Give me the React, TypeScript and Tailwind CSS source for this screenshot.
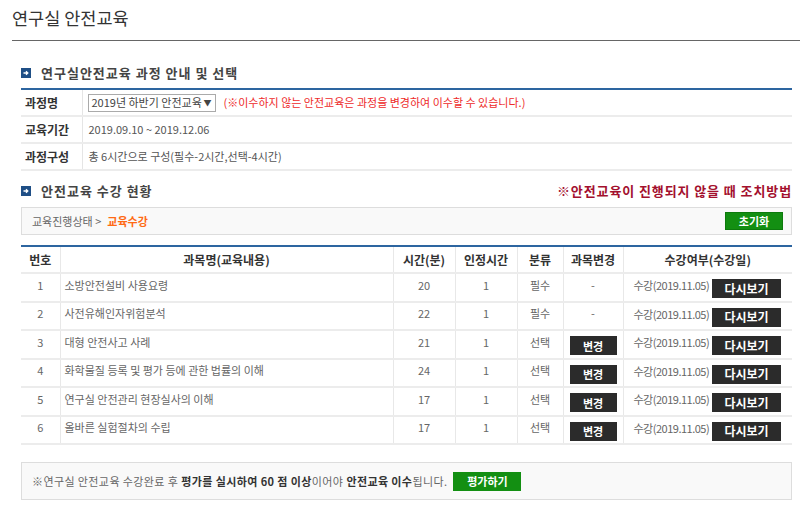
import React from "react";

const font = { fontFamily: '"Noto Sans CJK KR", "Noto Sans", sans-serif' };

function SecIcon() {
  return (
    <svg width="10" height="10" viewBox="0 0 10 10" className="shrink-0">
      <rect x="0" y="0" width="10" height="10" fill="#1f4f86" />
      <path d="M2.5 5 H6.5 M5 3.3 L6.8 5 L5 6.7" stroke="#fff" strokeWidth="1.3" fill="none" />
    </svg>
  );
}

const rows = [
  { n: 1, name: "소방안전설비 사용요령", t: 20, k: "필수" },
  { n: 2, name: "사전유해인자위험분석", t: 22, k: "필수" },
  { n: 3, name: "대형 안전사고 사례", t: 21, k: "선택" },
  { n: 4, name: "화학물질 등록 및 평가 등에 관한 법률의 이해", t: 24, k: "선택" },
  { n: 5, name: "연구실 안전관리 현장실사의 이해", t: 17, k: "선택" },
  { n: 6, name: "올바른 실험절차의 수립", t: 17, k: "선택" },
];

export default function App() {
  return (
    <div className="w-[800px] h-[506px] bg-white text-[#555] overflow-hidden pl-[12px]" style={font}>
      <div className="h-[41px] border-b border-[#666] flex items-center">
        <h1 className="text-[17.5px] text-[#333] font-normal leading-none -mt-[4px]">연구실 안전교육</h1>
      </div>

      <div className="pl-[9px] pr-[8px]">
        {/* section 1 */}
        <div className="h-[47px] flex items-center gap-[10px] pt-[16px]">
          <SecIcon />
          <span className="text-[13px] font-bold text-[#444] tracking-[1px]">연구실안전교육 과정 안내 및 선택</span>
        </div>
        <table className="w-full table-fixed border-collapse border-t-2 border-[#2d65a0] text-[11px]">
          <colgroup>
            <col className="w-[61px]" />
            <col />
          </colgroup>
          <tbody>
            <tr className="h-[27px] border-b-2 border-[#ececec]">
              <td className="font-bold text-[12px] text-[#333] pl-[4px] border-r border-[#e5e5e5]">과정명</td>
              <td className="pl-[5px]">
                <div className="flex items-center gap-[8px]">
                  <div className="h-[18px] w-[128px] border border-[#aaa] flex items-center justify-between px-[3px] text-[#444]">
                    <span>2019년 하반기 안전교육</span>
                    <span className="text-[8px]">▼</span>
                  </div>
                  <span className="text-[#ee2a2a]">(※이수하지 않는 안전교육은 과정을 변경하여 이수할 수 있습니다.)</span>
                </div>
              </td>
            </tr>
            <tr className="h-[27px] border-b-2 border-[#ececec]">
              <td className="font-bold text-[12px] text-[#333] pl-[4px] border-r border-[#e5e5e5]">교육기간</td>
              <td className="pl-[6px]">2019.09.10 ~ 2019.12.06</td>
            </tr>
            <tr className="h-[27px] border-b-2 border-[#ececec]">
              <td className="font-bold text-[12px] text-[#333] pl-[4px] border-r border-[#e5e5e5]">과정구성</td>
              <td className="pl-[6px]">총 6시간으로 구성(필수-2시간,선택-4시간)</td>
            </tr>
          </tbody>
        </table>

        {/* section 2 */}
        <div className="h-[36px] flex items-center justify-between pt-[4px]">
          <div className="flex items-center gap-[10px]">
            <SecIcon />
            <span className="text-[13px] font-bold text-[#444] tracking-[1px]">안전교육 수강 현황</span>
          </div>
          <span className="text-[13px] font-bold text-[#a3102e] tracking-[0.9px]">※안전교육이 진행되지 않을 때 조치방법</span>
        </div>
        <div className="h-[28px] border border-[#ddd] bg-[#f9f9f9] flex items-center justify-between pl-[10px] pr-[8px]">
          <div className="text-[11px] flex items-center gap-[6px]">
            <span className="text-[#666]">교육진행상태 &gt;</span>
            <span className="text-[#ff6a13] font-bold">교육수강</span>
          </div>
          <button className="h-[18px] w-[58px] bg-[#138f12] text-white text-[11px] font-bold border border-[#0d7a0d]">초기화</button>
        </div>

        <table className="mt-[10px] w-full table-fixed border-collapse border-t-2 border-[#2d65a0] text-[11px]">
          <colgroup>
            <col className="w-[39px]" />
            <col className="w-[333px]" />
            <col className="w-[62px]" />
            <col className="w-[62px]" />
            <col className="w-[46px]" />
            <col className="w-[60px]" />
            <col />
          </colgroup>
          <thead>
            <tr className="h-[27px] border-b-2 border-[#ececec] text-[12px] font-bold text-[#333]">
              <th className="border-r border-[#e8e8e8] font-bold">번호</th>
              <th className="border-r border-[#e8e8e8] font-bold">과목명(교육내용)</th>
              <th className="border-r border-[#e8e8e8] font-bold">시간(분)</th>
              <th className="border-r border-[#e8e8e8] font-bold">인정시간</th>
              <th className="border-r border-[#e8e8e8] font-bold">분류</th>
              <th className="border-r border-[#e8e8e8] font-bold">과목변경</th>
              <th className="font-bold">수강여부(수강일)</th>
            </tr>
          </thead>
          <tbody>
            {rows.map((r) => (
              <tr key={r.n} className="h-[28.5px] border-b-2 border-[#ececec] text-[#666]">
                <td className="text-center border-r border-[#e8e8e8] pb-[5px]">{r.n}</td>
                <td className="pl-[4px] border-r border-[#e8e8e8] pb-[5px]">{r.name}</td>
                <td className="text-center border-r border-[#e8e8e8] pb-[5px]">{r.t}</td>
                <td className="text-center border-r border-[#e8e8e8] pb-[5px]">1</td>
                <td className="text-center border-r border-[#e8e8e8] pb-[5px]">{r.k}</td>
                <td className="border-r border-[#e8e8e8]">
                  <div className="flex justify-center">
                    {r.k === "선택" ? (
                      <button className="h-[19px] w-[47px] mt-[3px] bg-[#2b2b2b] text-white text-[11px] font-bold">변경</button>
                    ) : (
                      <span className="mb-[5px]">-</span>
                    )}
                  </div>
                </td>
                <td className="pl-[10px] pr-[11px]">
                  <div className="flex items-center justify-between">
                    <span className="tracking-[-0.5px] mb-[4px]">수강(2019.11.05)</span>
                    <button className="shrink-0 h-[19px] w-[69px] mt-[3px] bg-[#2b2b2b] text-white text-[12px] font-bold">다시보기</button>
                  </div>
                </td>
              </tr>
            ))}
          </tbody>
        </table>

        <div className="mt-[17px] h-[38px] border border-[#ddd] bg-[#f9f9f9] flex items-center pl-[10px] text-[11px] text-[#666] tracking-[0.4px]">
          <span>※연구실 안전교육 수강완료 후 </span>
          <span className="font-bold text-[#333] ml-[3px]">평가를 실시하여 60 점 이상</span>
          <span>이어야 </span>
          <span className="font-bold text-[#333] ml-[3px]">안전교육 이수</span>
          <span>됩니다.</span>
          <button className="ml-[6px] h-[19px] w-[68px] bg-[#138f12] text-white text-[11px] font-bold tracking-normal">평가하기</button>
        </div>
      </div>
    </div>
  );
}
